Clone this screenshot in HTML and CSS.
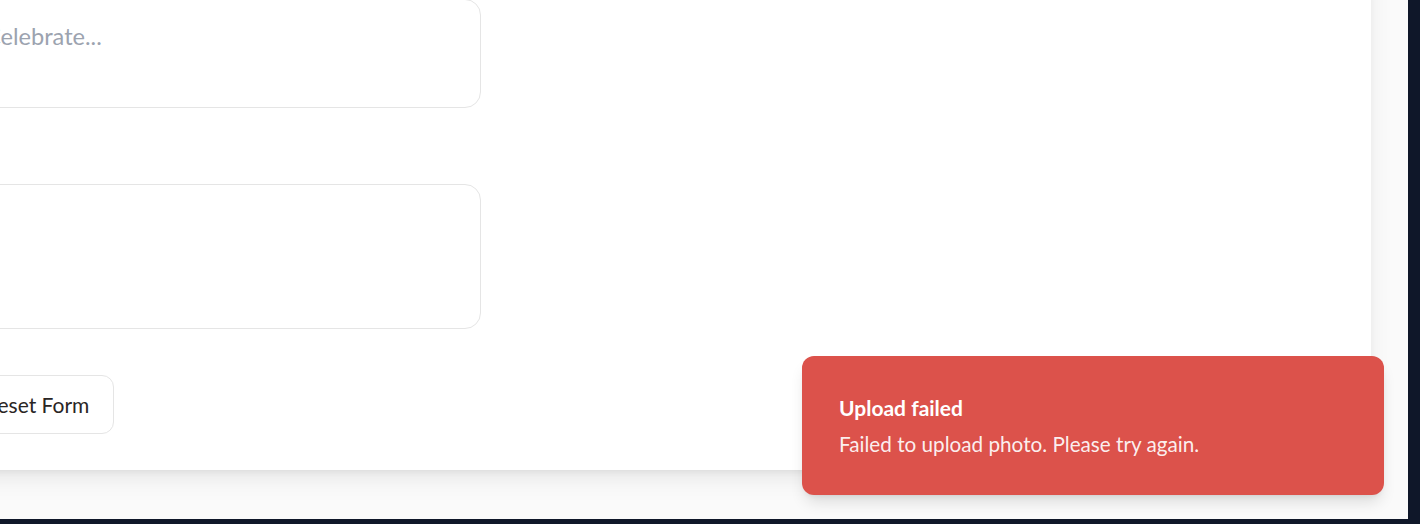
FILE: index.html
```html
<!DOCTYPE html>
<html lang="en">
<head>
<meta charset="utf-8">
<title>Upload</title>
<link rel="stylesheet" href="styles.css">
</head>
<body>
<div class="viewport">
  <main class="card">
    <form class="form">
      <div class="field">
        <textarea class="input input-first" placeholder="Celebrate..."></textarea>
      </div>
      <div class="field field-second">
        <textarea class="input input-second"></textarea>
      </div>
      <div class="actions">
        <button type="reset" class="btn">Reset Form</button>
      </div>
    </form>
  </main>
  <div class="toast" role="alert">
    <div class="toast-title">Upload failed</div>
    <div class="toast-body">Failed to upload photo. Please try again.</div>
  </div>
</div>
</body>
</html>
```
FILE: styles.css
```css
* { box-sizing: border-box; }
html, body { margin: 0; padding: 0; }
body {
  background: #0f1729;
  width: 1420px;
  height: 524px;
  overflow: hidden;
  font-family: Lato, "Noto Sans", sans-serif;
}
.viewport {
  position: relative;
  width: 1408px;
  height: 519px;
  background: #fafafa;
  overflow: hidden;
}
.card {
  margin-left: -400px;
  margin-top: -40px;
  width: 1771px;
  background: #ffffff;
  border-radius: 0 0 12px 0;
  box-shadow: 0 10px 25px -5px rgba(0,0,0,0.1), 0 4px 8px -4px rgba(0,0,0,0.08);
  padding: 39px 0 36px 366px;
}
.form {
  display: flex;
  flex-direction: column;
  width: 515px;
}
.field-second { margin-top: 76px; }
.input {
  display: block;
  width: 100%;
  border: 1px solid #e5e5e5;
  border-radius: 16px;
  background: #fff;
  resize: none;
  font-family: Lato, "Noto Sans", sans-serif;
  font-size: 23.6px;
  line-height: 28px;
  padding: 22px 18px;
  color: #292524;
  outline: none;
}
.input::placeholder { color: #9ca3af; }
.input-first { height: 109px; }
.input-second { height: 145px; }
.actions {
  margin-top: 46px;
  display: flex;
}
.btn {
  margin-left: -6px;
  height: 59px;
  padding: 0 24px;
  border: 1px solid #e5e5e5;
  border-radius: 12px;
  background: #fff;
  color: #292524;
  font-family: Lato, "Noto Sans", sans-serif;
  font-size: 21px;
}
.toast {
  position: absolute;
  right: 24px;
  bottom: 24px;
  width: 582px;
  height: 139px;
  background: #dc524b;
  border-radius: 12px;
  padding: 38px 37px;
  color: #fff;
  box-shadow: 0 10px 15px -3px rgba(0,0,0,0.12), 0 4px 6px -4px rgba(0,0,0,0.1);
}
.toast-title {
  font-weight: 700;
  font-size: 21px;
  line-height: 28px;
}
.toast-body {
  margin-top: 8px;
  font-size: 20.7px;
  line-height: 28px;
  color: rgba(255,255,255,0.92);
}
```
